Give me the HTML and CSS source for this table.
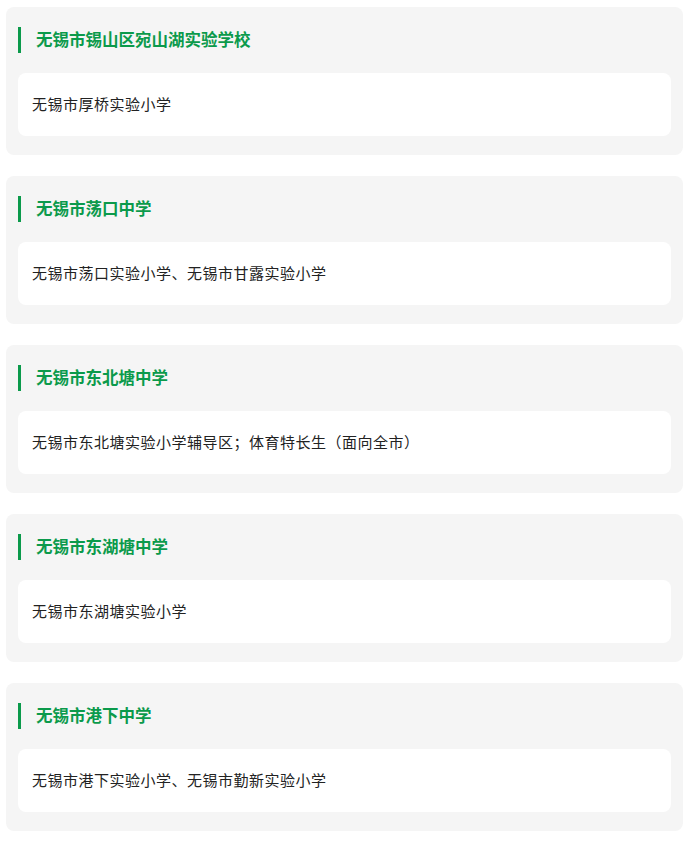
FILE: index.html
```html
<!DOCTYPE html>
<html lang="zh">
<head>
<meta charset="utf-8">
<link rel="stylesheet" href="styles.css">
</head>
<body>
<div class="list">
  <div class="card">
    <div class="title">无锡市锡山区宛山湖实验学校</div>
    <div class="body">无锡市厚桥实验小学</div>
  </div>
  <div class="card">
    <div class="title">无锡市荡口中学</div>
    <div class="body">无锡市荡口实验小学、无锡市甘露实验小学</div>
  </div>
  <div class="card">
    <div class="title">无锡市东北塘中学</div>
    <div class="body">无锡市东北塘实验小学辅导区；体育特长生（面向全市）</div>
  </div>
  <div class="card">
    <div class="title">无锡市东湖塘中学</div>
    <div class="body">无锡市东湖塘实验小学</div>
  </div>
  <div class="card">
    <div class="title">无锡市港下中学</div>
    <div class="body">无锡市港下实验小学、无锡市勤新实验小学</div>
  </div>
</div>
</body>
</html>
```
FILE: styles.css
```css
html, body {
  margin: 0;
  padding: 0;
  background: #ffffff;
}
body {
  font-family: "Noto Sans CJK SC", "Noto Sans", sans-serif;
}
.list {
  padding: 7px 8px 0 6px;
  display: flex;
  flex-direction: column;
  gap: 21px;
}
.card {
  background: #f5f5f5;
  border-radius: 8px;
  padding: 20px 12px 19px;
  display: flex;
  flex-direction: column;
  gap: 20px;
}
.title {
  border-left: 3px solid #0b9a4b;
  height: 26px;
  box-sizing: border-box;
  line-height: 24px;
  padding: 0 0 2px 15px;
  font-size: 16.5px;
  letter-spacing: 0px;
  font-weight: 700;
  color: #0b9a4b;
}
.body {
  background: #ffffff;
  border-radius: 8px;
  height: 63px;
  box-sizing: border-box;
  line-height: 61px;
  padding: 0 14px 2px;
  font-size: 15px;
  letter-spacing: 0.5px;
  color: #222222;
}
```
